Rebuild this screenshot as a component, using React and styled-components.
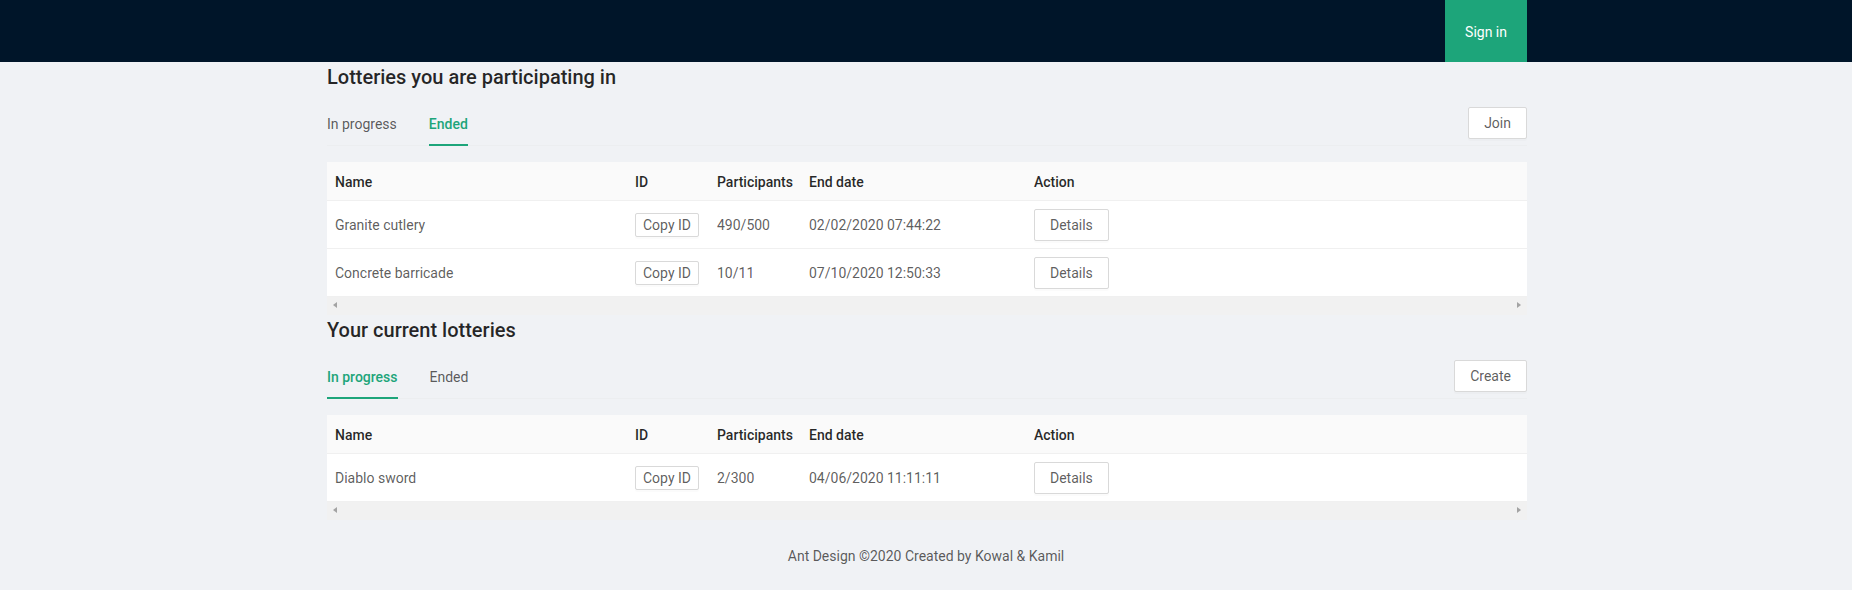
import React from 'react';
import styled, { createGlobalStyle } from 'styled-components';

const PRIMARY = '#1da57a';

const GlobalStyle = createGlobalStyle`
  html, body {
    margin: 0;
    padding: 0;
    background: #fff;
  }
  body {
    font-family: Roboto, "Segoe UI", "Liberation Sans", sans-serif;
    font-size: 14px;
    line-height: 1.5715;
    color: rgba(0, 0, 0, 0.65);
  }
  * {
    box-sizing: border-box;
  }
`;

const Layout = styled.div`
  background: #f0f2f5;
`;

const Header = styled.header`
  height: 62px;
  background: #001529;
`;

const Container = styled.div`
  width: 1200px;
  margin: 0 auto 0 calc(50% - 599px);
`;

const HeaderInner = styled(Container)`
  height: 100%;
  display: flex;
  justify-content: flex-end;
`;

const NavItem = styled.a`
  display: flex;
  align-items: center;
  padding: 1px 20px 0;
  background: ${PRIMARY};
  color: #fff;
  font-size: 14px;
  text-decoration: none;
  cursor: pointer;
`;

const Title = styled.h4`
  margin: 0 0 10px;
  padding-top: 3px;
  font-size: 20px;
  line-height: 25px;
  font-weight: 500;
  color: rgba(0, 0, 0, 0.85);
`;

const TabBar = styled.div`
  display: flex;
  align-items: center;
  justify-content: space-between;
  border-bottom: 1px solid #eceef0;
  margin-bottom: 16px;
`;

const TabList = styled.div`
  display: flex;
  gap: 32px;
`;

const Tab = styled.div`
  padding: 13px 0 9px;
  line-height: 22px;
  font-size: 14px;
  cursor: pointer;
  color: ${(p) => (p.$active ? PRIMARY : 'rgba(0, 0, 0, 0.65)')};
  font-weight: ${(p) => (p.$active ? 500 : 400)};
  border-bottom: 2px solid ${(p) => (p.$active ? PRIMARY : 'transparent')};
  margin-bottom: -1px;
`;

const Button = styled.button`
  height: ${(p) => (p.$small ? 24 : 32)}px;
  padding: ${(p) => (p.$small ? '0 7px' : '4px 15px')};
  font-family: inherit;
  font-size: 14px;
  line-height: 1.5715;
  color: rgba(0, 0, 0, 0.65);
  background: #fff;
  border: 1px solid #d9d9d9;
  border-radius: 2px;
  box-shadow: 0 2px 0 rgba(0, 0, 0, 0.015);
  cursor: pointer;
  white-space: nowrap;
`;

const Table = styled.div`
  background: #fff;
`;

const Row = styled.div`
  display: grid;
  grid-template-columns: 300px 82px 92px 225px 1fr;
  background: ${(p) => (p.$head ? '#fafafa' : '#fff')};
  border-bottom: 1px solid #f0f0f0;
`;

const Cell = styled.div`
  display: flex;
  align-items: center;
  padding: ${(p) => (p.$head ? '9px 8px 6.6px' : '8px 8px 7.4px')};
  line-height: 22px;
  white-space: nowrap;
  color: ${(p) => (p.$head ? 'rgba(0, 0, 0, 0.85)' : 'rgba(0, 0, 0, 0.65)')};
  font-weight: ${(p) => (p.$head ? 500 : 400)};
`;

const ScrollBar = styled.div`
  position: relative;
  height: 18px;
  background: #f1f1f1;

  &::before,
  &::after {
    content: '';
    position: absolute;
    top: 5px;
    border-top: 3.5px solid transparent;
    border-bottom: 3.5px solid transparent;
  }
  &::before {
    left: 6px;
    border-right: 4px solid #a3a3a3;
  }
  &::after {
    right: 6px;
    border-left: 4px solid #a3a3a3;
  }
`;

const Footer = styled.footer`
  padding: 25px 50px 23px;
  text-align: center;
  line-height: 22px;
  color: rgba(0, 0, 0, 0.65);
`;

const columns = ['Name', 'ID', 'Participants', 'End date', 'Action'];

function LotteryTable({ rows }) {
  return (
    <>
      <Table>
        <Row $head>
          {columns.map((c) => (
            <Cell $head key={c}>{c}</Cell>
          ))}
        </Row>
        {rows.map((r) => (
          <Row key={r.name}>
            <Cell>{r.name}</Cell>
            <Cell><Button $small>Copy ID</Button></Cell>
            <Cell>{r.participants}</Cell>
            <Cell>{r.endDate}</Cell>
            <Cell><Button>Details</Button></Cell>
          </Row>
        ))}
      </Table>
      <ScrollBar />
    </>
  );
}

function Section({ title, tabs, activeTab, action, rows }) {
  return (
    <section>
      <Title>{title}</Title>
      <TabBar>
        <TabList>
          {tabs.map((t) => (
            <Tab key={t} $active={t === activeTab}>{t}</Tab>
          ))}
        </TabList>
        <Button>{action}</Button>
      </TabBar>
      <LotteryTable rows={rows} />
    </section>
  );
}

const participating = [
  { name: 'Granite cutlery', participants: '490/500', endDate: '02/02/2020 07:44:22' },
  { name: 'Concrete barricade', participants: '10/11', endDate: '07/10/2020 12:50:33' },
];

const current = [
  { name: 'Diablo sword', participants: '2/300', endDate: '04/06/2020 11:11:11' },
];

export default function App() {
  return (
    <Layout>
      <GlobalStyle />
      <Header>
        <HeaderInner>
          <NavItem>Sign in</NavItem>
        </HeaderInner>
      </Header>
      <Container>
        <Section
          title="Lotteries you are participating in"
          tabs={['In progress', 'Ended']}
          activeTab="Ended"
          action="Join"
          rows={participating}
        />
        <Section
          title="Your current lotteries"
          tabs={['In progress', 'Ended']}
          activeTab="In progress"
          action="Create"
          rows={current}
        />
      </Container>
      <Footer>Ant Design ©2020 Created by Kowal &amp; Kamil</Footer>
    </Layout>
  );
}
